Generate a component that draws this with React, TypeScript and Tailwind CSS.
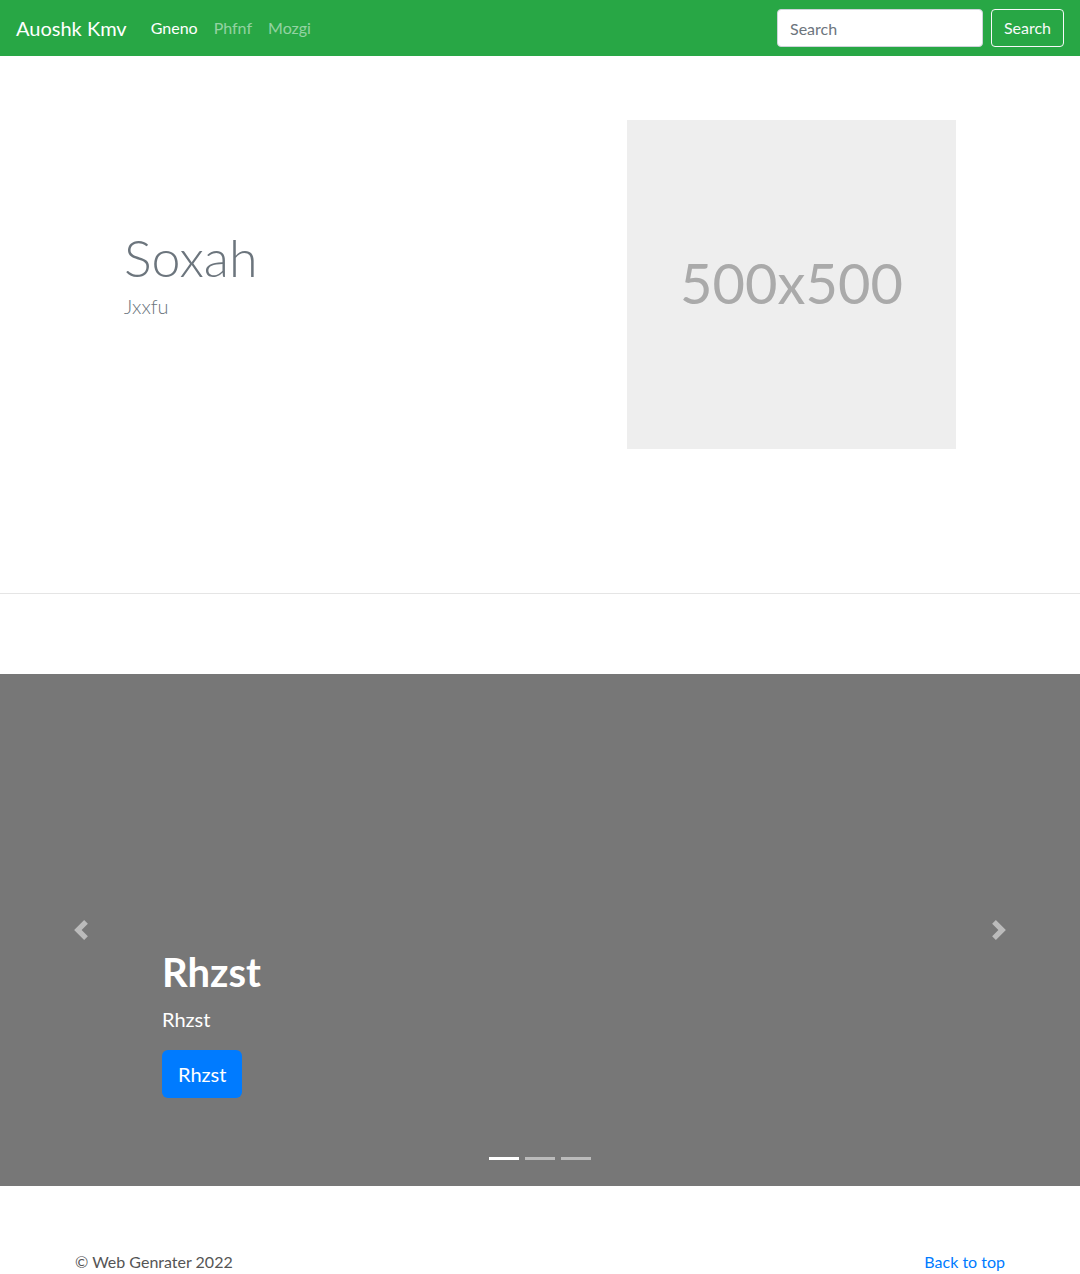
import React from 'react';

const font = { fontFamily: 'Lato, "Open Sans", sans-serif' };

const PrevIcon = () => (
    <svg width="20" height="20" viewBox="0 0 8 8" fill="#fff">
        <path d="M5.25 0l-4 4 4 4 1.5-1.5L4.25 4l2.5-2.5L5.25 0z" />
    </svg>
);

const NextIcon = () => (
    <svg width="20" height="20" viewBox="0 0 8 8" fill="#fff">
        <path d="M2.75 0l-1.5 1.5L3.75 4l-2.5 2.5L2.75 8l4-4-4-4z" />
    </svg>
);

const Navbar: React.FC = () => (
    <nav className="h-14 bg-[#28a745] flex items-center px-4">
        <a className="text-white text-[20px] leading-[30px] mr-4">Auoshk Kmv</a>
        <ul className="flex items-center text-[16px]">
            <li className="px-2 text-white">Gneno</li>
            <li className="px-2 text-white/50">Phfnf</li>
            <li className="px-2 text-white/50">Mozgi</li>
        </ul>
        <form className="ml-auto flex items-center">
            <input
                type="text"
                placeholder="Search"
                className="w-[206px] h-[38px] bg-white rounded border border-[#ced4da] px-3 text-[16px] text-[#495057] placeholder:text-[#6c757d] outline-none mr-2"
            />
            <button type="button" className="w-[73px] h-[38px] rounded border border-[#f8f9fa] text-[#f8f9fa] text-[16px]">
                Search
            </button>
        </form>
    </nav>
);

const Hero: React.FC = () => (
    <section className="border-b border-[#e5e5e5] h-[538px] pt-16">
        <div className="w-[960px] mx-auto px-[15px] flex items-center">
            <div className="w-[465px] pl-[49px] pb-6">
                <h1 className="text-[52px] font-light leading-[67px] text-[#6c757d]">Soxah</h1>
                <p className="text-[20px] font-light leading-[30px] text-[#6c757d]">Jxxfu</p>
            </div>
            <div className="flex-1 pl-[87px]">
                <div className="w-[329px] h-[329px] bg-[#eeeeee] flex items-center justify-center">
                    <span className="text-[56px] leading-none text-[#aaaaaa] -mt-1">500x500</span>
                </div>
            </div>
        </div>
    </section>
);

const Carousel: React.FC = () => (
    <div className="relative mt-20 mb-16 h-[512px] bg-[#777777]">
        <div className="absolute left-0 top-0 bottom-0 w-[15%] flex items-center justify-center opacity-50">
            <PrevIcon />
        </div>
        <div className="absolute right-0 top-0 bottom-0 w-[15%] flex items-center justify-center opacity-50">
            <NextIcon />
        </div>
        <div className="absolute left-[15%] right-[15%] bottom-12 pb-10 pt-5 text-white text-left">
            <h1 className="text-[40px] font-bold leading-[48px] mb-2">Rhzst</h1>
            <p className="text-[20px] leading-[30px] mb-4">Rhzst</p>
            <button type="button" className="h-12 px-4 rounded-md bg-[#007bff] text-white text-[20px]">
                Rhzst
            </button>
        </div>
        <ol className="absolute bottom-[26px] left-0 right-0 flex justify-center gap-[6px]">
            <li className="w-[30px] h-[3px] bg-white" />
            <li className="w-[30px] h-[3px] bg-white/50" />
            <li className="w-[30px] h-[3px] bg-white/50" />
        </ol>
    </div>
);

const Footer: React.FC = () => (
    <footer className="w-[960px] mx-auto px-[15px] flex justify-between text-[16px] leading-6 pb-12">
        <p className="text-[#555555]">© Web Genrater 2022</p>
        <a className="text-[#007bff]">Back to top</a>
    </footer>
);

export default function App() {
    return (
        <div className="bg-white min-h-screen" style={font}>
            <Navbar />
            <Hero />
            <Carousel />
            <Footer />
        </div>
    );
}
